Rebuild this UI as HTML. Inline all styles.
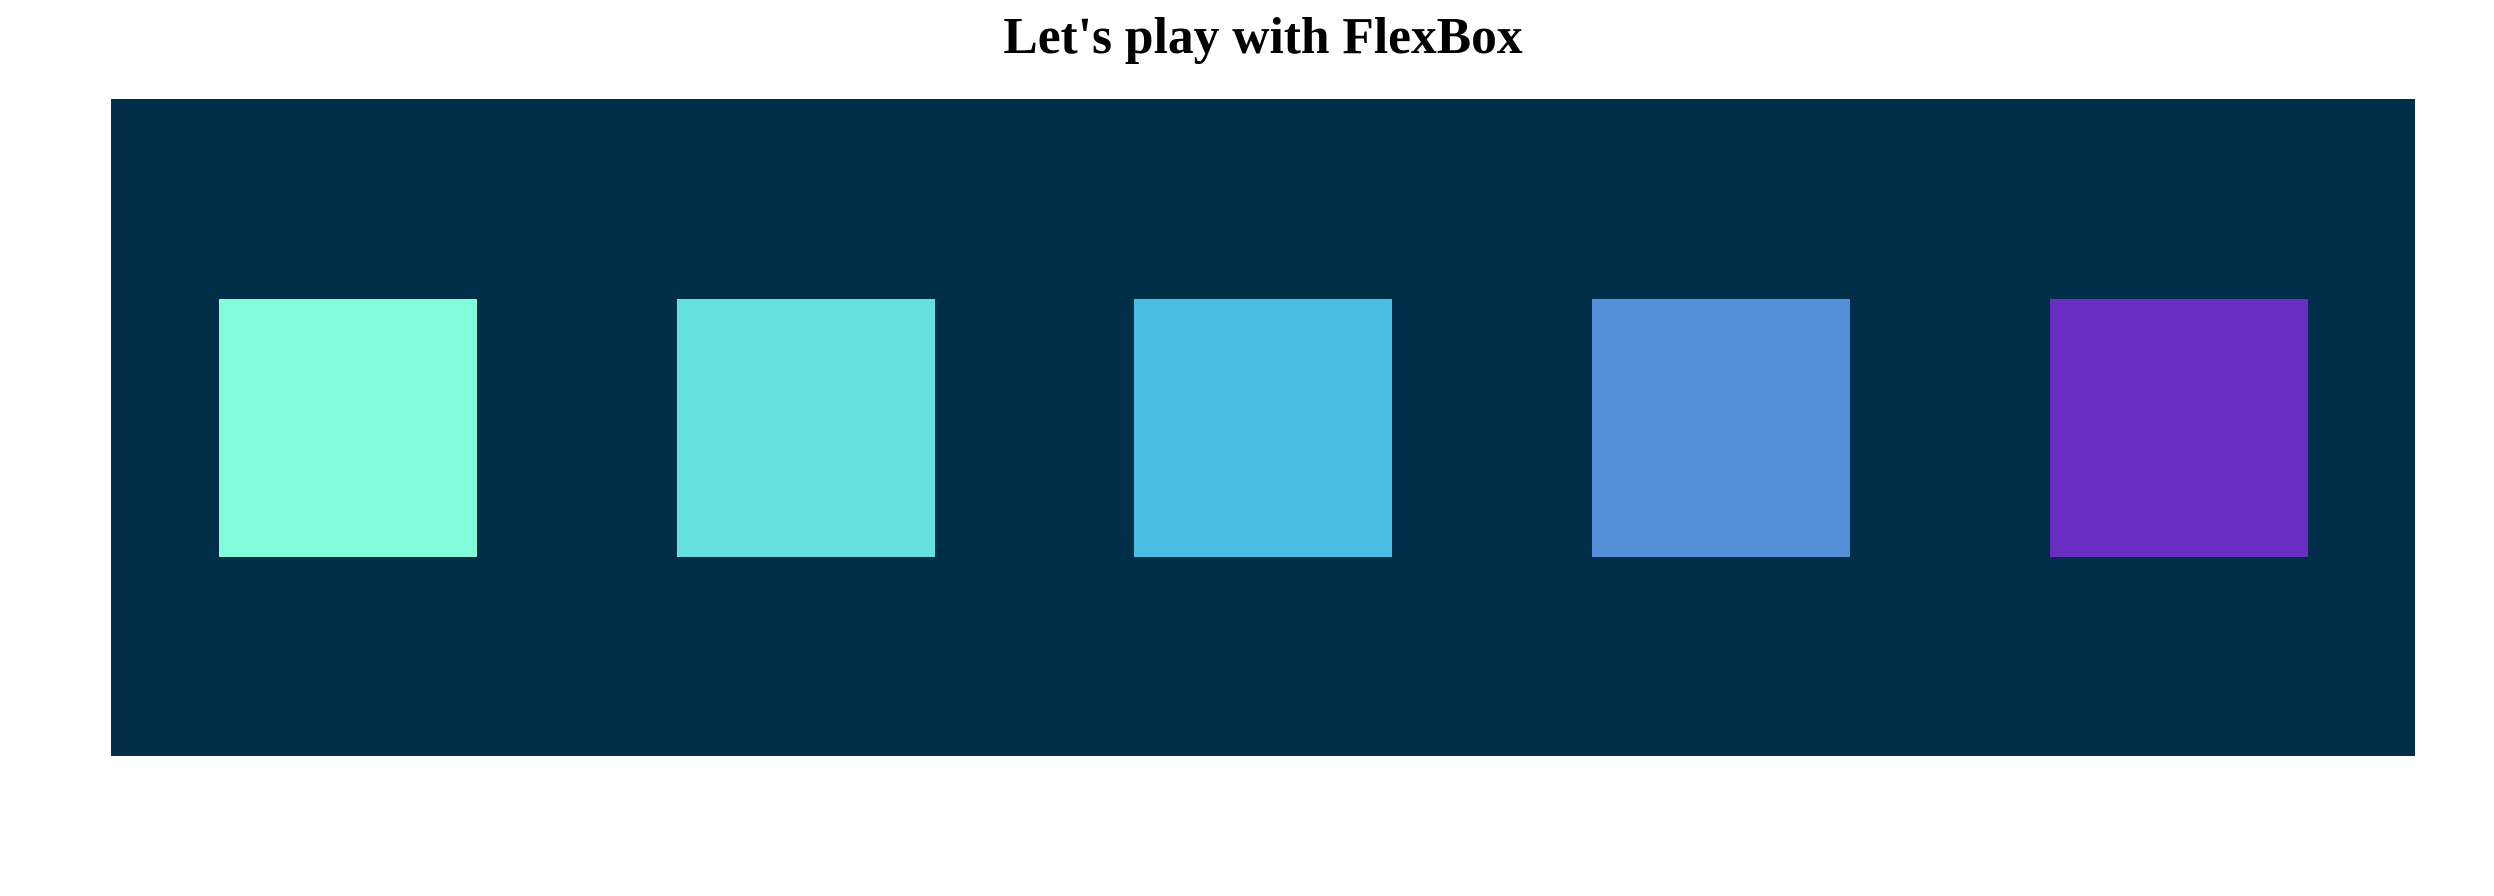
<!DOCTYPE html>
<html><head><style>
html,body{margin:0;padding:0;background:#fff;width:2494px;height:896px;overflow:hidden}
h1{position:absolute;left:16px;width:2494px;top:1px;margin:0;text-align:center;font-family:"Liberation Serif",serif;font-weight:bold;font-size:51.5px;line-height:72px}
.c{position:absolute;left:111px;top:99px;width:2304px;height:657px;background:#012f49}
.b{position:absolute;top:299px;width:258px;height:258px}
</style></head><body>
<h1>Let's play with FlexBox</h1>
<div class="c"></div>
<div class="b" style="left:219px;background:#82ffda"></div>
<div class="b" style="left:677px;background:#64e0e0"></div>
<div class="b" style="left:1134px;background:#49bee3"></div>
<div class="b" style="left:1592px;background:#5490da"></div>
<div class="b" style="left:2050px;background:#6a2fc2"></div>
</body></html>
